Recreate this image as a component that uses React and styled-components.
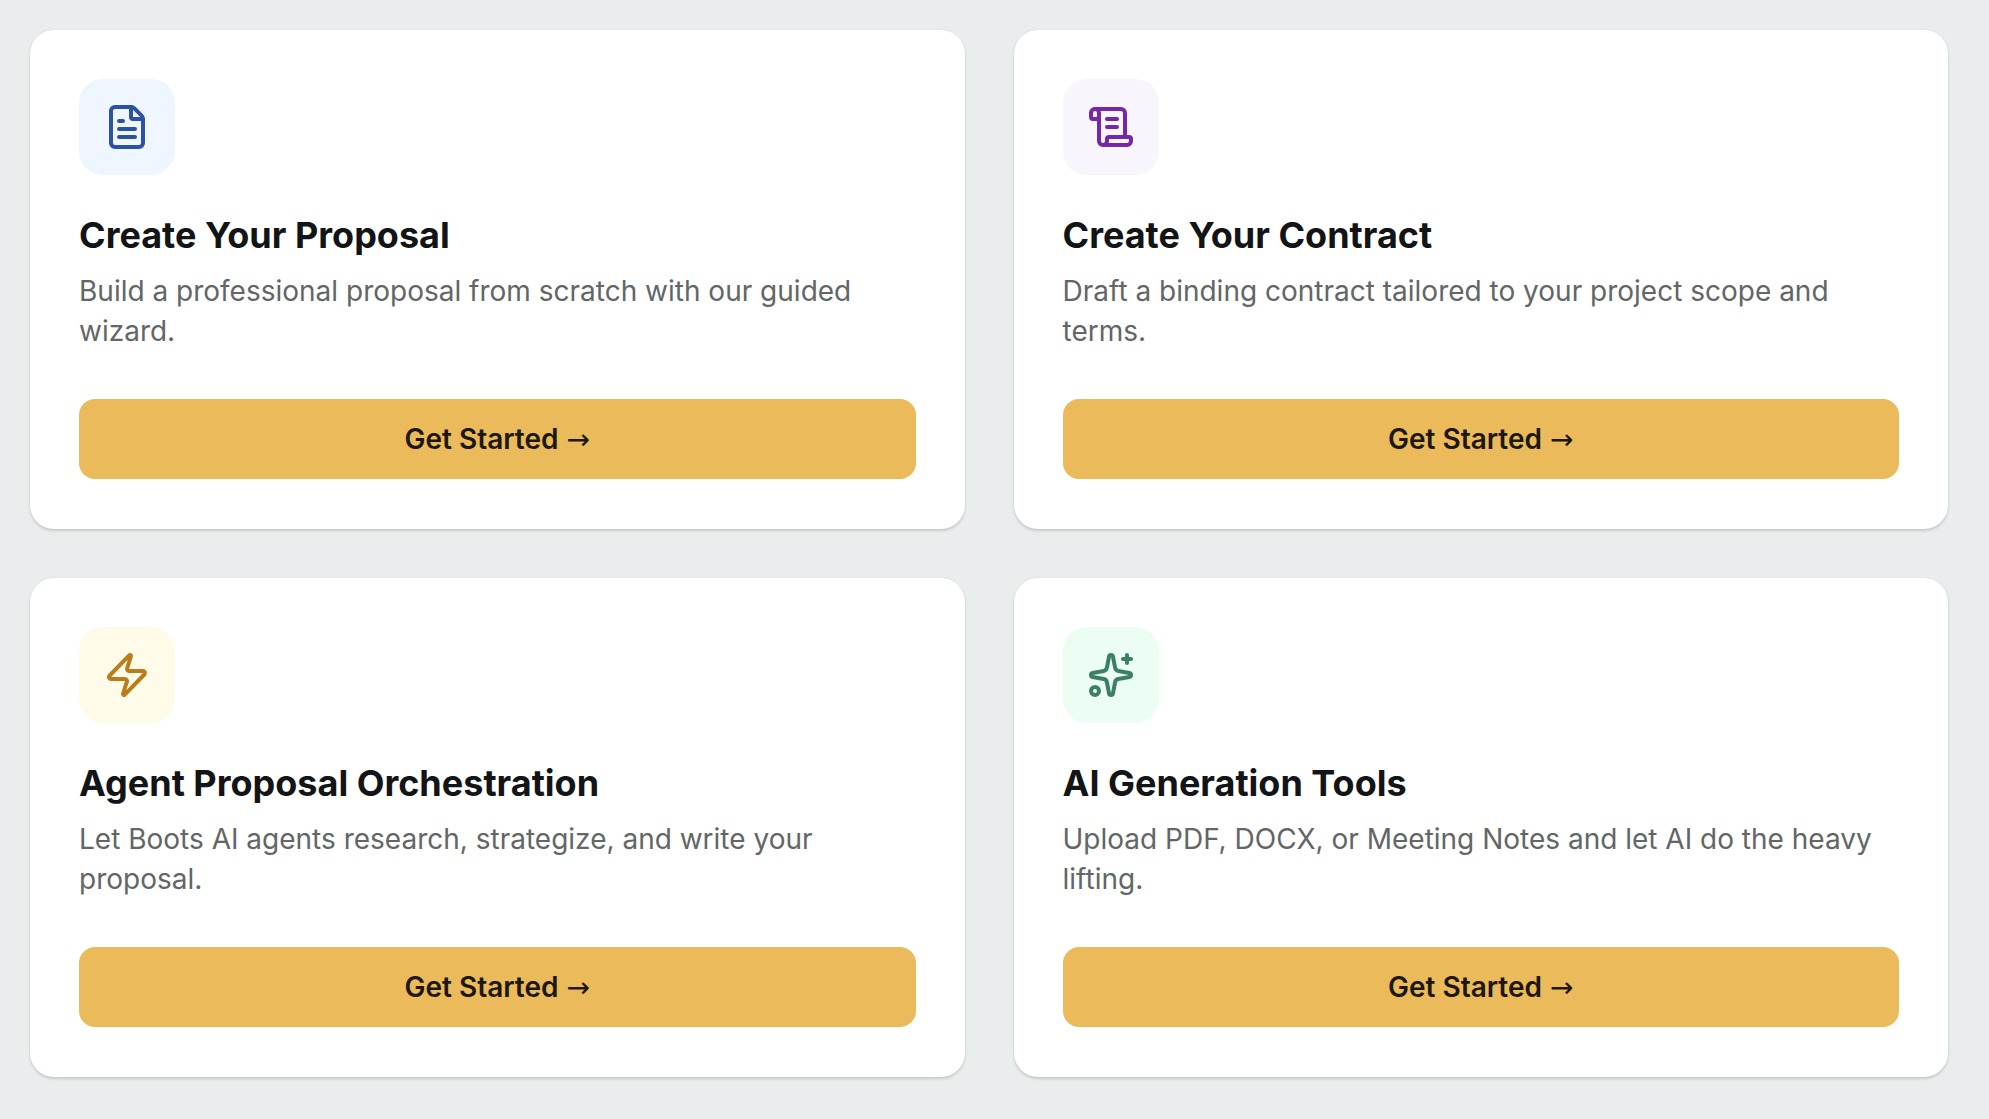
import React from 'react';
import styled, { createGlobalStyle } from 'styled-components';
import { FileText, ScrollText, Zap, Sparkles } from 'lucide-react';

const GlobalStyle = createGlobalStyle`
  * {
    box-sizing: border-box;
  }

  body {
    margin: 0;
    background-color: #eaeded;
    font-family: Inter, 'Liberation Sans', sans-serif;
  }
`;

const Main = styled.main`
  width: 100%;
  padding: 30px 41px 42px 30px;
`;

const CardGrid = styled.div`
  display: grid;
  grid-template-columns: repeat(2, minmax(0, 1fr));
  gap: 49px;

  @media (max-width: 1100px) {
    grid-template-columns: minmax(0, 1fr);
  }
`;

const Card = styled.section`
  display: flex;
  flex-direction: column;
  align-items: flex-start;
  padding: 49px 49px 50px;
  border-radius: 24px;
  background-color: #fefffe;
  box-shadow: 0 2px 3px rgba(0, 0, 0, 0.14), 0 0 3px rgba(0, 0, 0, 0.05);
`;

const IconTile = styled.div`
  width: 96px;
  height: 96px;
  margin-bottom: 36px;
  display: flex;
  align-items: center;
  justify-content: center;
  border-radius: 24px;
  background-color: ${props => props.$bg};
  color: ${props => props.$color};
`;

const CardTitle = styled.h2`
  margin: 0 0 12px;
  font-size: 36px;
  font-weight: 700;
  line-height: 48px;
  color: #131415;
`;

const CardText = styled.p`
  margin: 0 0 48px;
  font-size: 28px;
  font-weight: 400;
  line-height: 40px;
  color: #636667;
`;

const StartButton = styled.button`
  width: 100%;
  height: 80px;
  margin-top: auto;
  border: none;
  border-radius: 16px;
  background-color: #ebba5a;
  color: #1c1707;
  font-family: inherit;
  font-size: 28px;
  font-weight: 600;
  line-height: 40px;
  cursor: pointer;

  &:hover {
    background-color: #e3af49;
  }
`;

const Arrow = styled.span`
  margin-left: 1px;
  font-family: 'DejaVu Sans', sans-serif;
  font-weight: 400;
`;

const cards = [
  {
    id: 'proposal',
    icon: FileText,
    bg: '#eff6ff',
    color: '#2a52a5',
    title: 'Create Your Proposal',
    text: 'Build a professional proposal from scratch with our guided wizard.',
  },
  {
    id: 'contract',
    icon: ScrollText,
    bg: '#f8f5fd',
    color: '#7427a8',
    title: 'Create Your Contract',
    text: 'Draft a binding contract tailored to your project scope and terms.',
  },
  {
    id: 'agents',
    icon: Zap,
    bg: '#fefce9',
    color: '#bd7c1c',
    title: 'Agent Proposal Orchestration',
    text: 'Let Boots AI agents research, strategize, and write your proposal.',
  },
  {
    id: 'tools',
    icon: Sparkles,
    bg: '#ecfef3',
    color: '#3b8064',
    title: 'AI Generation Tools',
    text: 'Upload PDF, DOCX, or Meeting Notes and let AI do the heavy lifting.',
  },
];

function App() {
  return (
    <>
      <GlobalStyle />
      <Main>
        <CardGrid>
          {cards.map(({ id, icon: Icon, bg, color, title, text }) => (
            <Card key={id}>
              <IconTile $bg={bg} $color={color}>
                <Icon size={48} strokeWidth={2} aria-hidden="true" />
              </IconTile>
              <CardTitle>{title}</CardTitle>
              <CardText>{text}</CardText>
              <StartButton type="button">
                Get Started <Arrow>→</Arrow>
              </StartButton>
            </Card>
          ))}
        </CardGrid>
      </Main>
    </>
  );
}

export default App;
